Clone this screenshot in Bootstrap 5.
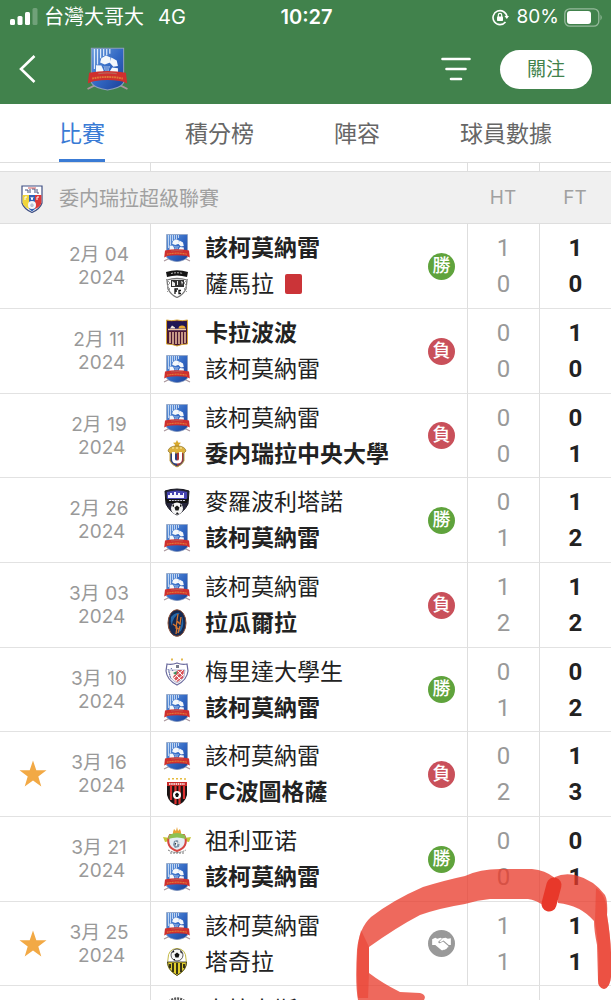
<!DOCTYPE html>
<html lang="zh-Hant">
<head>
<meta charset="utf-8">
<meta name="viewport" content="width=device-width, initial-scale=1">
<title>該柯莫納雷 - 比賽</title>
<link rel="stylesheet" href="https://cdn.jsdelivr.net/npm/bootstrap@5.3.0/dist/css/bootstrap.min.css">
<style>
  body { font-family: Inter, "Noto Sans CJK TC", sans-serif; color: #222; background: #fff; }
  a { text-decoration: none; }
  .screen { height: 100vh; overflow: hidden; }
  .topbar { background: #41824c; color: #fff; }
  .status { height: 34px; font-size: 20px; line-height: 34px; display: grid; grid-template-columns: 1fr auto 1fr; padding: 0 8px 0 10px; }
  .status-time { font-weight: 600; }
  .carrier { margin-left: 6px; }
  .status-net { margin-left: 14px; }
  .pct { font-size: 19px; margin: 0 5px 0 8px; }
  .team-bar { height: 70px; padding: 0 19px; }
  .back { width: 67px; }
  .follow { width: 92px; height: 39px; border: 0; border-radius: 20px; background: #fff; color: #41824c; font-size: 19px; line-height: 39px; padding: 0; margin-left: 29px; }
  .plain { border: 0; background: none; padding: 0; line-height: 0; }
  .tabs { height: 59px; padding: 0 59px; border-bottom: 1px solid #dedede; }
  .tabs a { font-size: 23px; line-height: 60px; color: #666; height: 58px; }
  .tabs a.active { color: #3a7bd5; border-bottom: 3px solid #3a7bd5; }
  .fixtures { width: 100%; table-layout: fixed; border-collapse: separate; border-spacing: 0; }
  .fixtures th, .fixtures td { padding: 0; vertical-align: middle; text-align: center; }
  .c-star { width: 65px; } .c-date { width: 86px; } .c-res { width: 51px; } .c-num { width: 72px; }
  .fixtures .date { padding-right: 17px; border-right: 1px solid #dedede; color: #999; font-size: 19px; line-height: 23px; white-space: pre; }
  .fixtures .ht, .fixtures .ft { border-left: 1px solid #dedede; font-family: Roboto, "Noto Sans", sans-serif; font-size: 24px; line-height: 36px; }
  .ht { color: #999; font-weight: 400; }
  .ft { font-weight: 700; }
  .gap-row td { height: 8px; }
  .league th { height: 53px; background: #f0f0f0; border-top: 1px solid #dedede; border-bottom: 1px solid #dedede; color: #a0a0a0; font-size: 20px; font-weight: 400; }
  .league th { padding-top: 2px; }
  .league .league-name { text-align: left; padding-left: 21px; }
  .league .h { font-size: 19px; }
  .match td { height: 85px; border-bottom: 1px solid #e2e2e2; }
  .match:nth-child(3n) td { height: 84px; }
  .team { height: 36px; line-height: 36px; font-size: 23px; padding-left: 12px; gap: 14px; white-space: nowrap; display: flex; align-items: center; }
  .team svg { width: 28px; height: 28px; flex: none; }
  .win { font-weight: 700; }
  .red-card { width: 17px; height: 20px; border-radius: 2px; background: #cb3438; margin-left: -3px; }
  .res { display: inline-block; width: 27px; height: 27px; border-radius: 50%; color: #fff; font-size: 18px; line-height: 26px; vertical-align: middle; font-weight: 500; }
  .res-w { background: #5fa33c; } .res-l { background: #c9505a; } .res-d { background: #999; }
  .res svg { display: block; }
  .marker { position: absolute; right: 0; top: 862px; pointer-events: none; }
</style>
</head>
<body>
<svg width="0" height="0" class="position-absolute" aria-hidden="true">
  <defs>
    <linearGradient id="blue" x1="0" x2="1" y1="0" y2="1"><stop offset="0" stop-color="#6d9fdd"/><stop offset=".5" stop-color="#3268c4"/><stop offset="1" stop-color="#1c3f96"/></linearGradient>
    <symbol id="home" viewBox="0 0 28 28">
      <path d="M1 27l6-3M27 27l-6-3" stroke="#a9959c" stroke-width="1.200"/>
      <path d="M3.500 .5h21V23q-2 3.500-10.500 4.700Q5.500 26.500 3.500 23z" fill="url(#blue)" stroke="#8c9dbd" stroke-width=".7"/>
      <path d="M5.500 1v13M7.500 1v10M9.500 1v6M11.500 1v4.500M13.500 1v4M15.500 1v3" stroke="#dce9fa" stroke-width=".8"/>
      <path d="M10 7l3-1.800 3 1.300-.3 3.300-3.500 1.200-3-1.200zM16.500 6.500l3.500 2 .8 3.500-3 .5-2.300-2.500zM6.500 11.500l3.500.3 1.500 3.200-1.500 2.500H6.500zM17 13l3.800.5V18h-4.300l-1-2.500zM11.500 12h4l-1 3.500h-2z" fill="#f4f7fb"/>
      <path d="M11.500 12h4l-1 3.500h-2z" fill="#6f97d8"/>
      <path d="M2 16.500q12-2.500 24 0l.8 7q-2.800-1.500-4.800-1.700-8-1.300-16 0-2 .2-4.800 1.700z" fill="#cf302e"/>
      <path d="M4 20.200q10-2 20 0" fill="none" stroke="#dd7b38" stroke-width="1.200" stroke-dasharray="1.200 .4"/>
      <path d="M8 17q6-1 12 0" fill="none" stroke="#b9655a" stroke-width=".7"/>
    </symbol>
    <symbol id="zamora" viewBox="0 0 28 28">
      <path d="M4 10q5-1.500 10-1.500T24 10l-1 9q-3 6-9 8.500Q8 25 5 19z" fill="#fff" stroke="#777" stroke-width="1.300"/>
      <path d="M3 2q11-3.500 22 0l-1 5q-10-3-20 0z" fill="#151515"/>
      <path d="M8 3.500q6-1.500 12 0" fill="none" stroke="#bbb" stroke-dasharray="2 1"/>
      <path d="M8 10h13v7H8z" fill="#333"/><path d="M9 11l3 2v3H9zM14 11h1v4h-1zM18 11l2 1-1 3z" fill="#eee"/>
      <path d="M3 9l4 4-3 3 3 3-3 3M25 9l-4 4 3 3-3 3 3 3" fill="none" stroke="#999"/>
      <path d="M12 24v-5h3M12 21h2M18 20.500h-2v3h2" fill="none" stroke="#111" stroke-width="1.300"/>
    </symbol>
    <symbol id="carabobo" viewBox="0 0 28 28">
      <path d="M3.500 1q5 1.500 10.500 0 5.500 1.500 10.500 0v24q-6 0-10.500 2Q9.500 25 3.500 25z" fill="#4a1733" stroke="#d8a737" stroke-width="1"/>
      <path d="M4.500 2.500h19v9h-19z" fill="#211654"/><path d="M15.500 9.500q0-3 3.500-3t3.500 3z" fill="#e9a82f"/><path d="M7 9.500l2-3 3 2v1z" fill="#f4eadf"/>
      <path d="M5 10.500h18M7 13v11M10 13v12M13 13v12M16 13v12M19 13v12M22 13v11" stroke="#efc3a3" stroke-width="1.500"/>
    </symbol>
    <symbol id="ucv" viewBox="0 0 28 28">
      <path d="M14 0l1.200 2.500 2.800.3-2 2 .5 2.500L14 6l-2.500 1.300.5-2.500-2-2 2.800-.3z" fill="#d8a92d"/>
      <path d="M5 11q1-5 9-5t9 5l-3 3H8z" fill="#ddb23e" stroke="#8f7429" stroke-width=".7"/>
      <path d="M7 13h14v8q-2 4-7 6-5-2-7-6z" fill="#2b3c79" stroke="#c39c38"/>
      <path d="M14 13h6v8q-2 3-6 5z" fill="#a83434"/>
      <path d="M10.500 12v7q0 3 3.500 3t3.500-3v-7" fill="none" stroke="#fff" stroke-width="3"/>
      <path d="M9 8h2M13 8h2M17 8h2" stroke="#fff3b0"/>
    </symbol>
    <symbol id="metro" viewBox="0 0 28 28">
      <path d="M2 3q12-4 24 0l-1 13q-4 8-11 11Q7 24 3 16z" fill="#25253b" stroke="#15151f"/>
      <path d="M4 4q10-3 20 0v7H4z" fill="#4544b1"/><path d="M5 10V7h2V5h2v2h2V4h2v3h2V5h2v2h3V5h1v5z" fill="#f4f3ff"/>
      <path d="M2 10l3 1h18l3-1-2 5H4z" fill="#111"/><path d="M6 12.500h16" stroke="#c8c8d8" stroke-dasharray="2 .8"/>
      <circle cx="14" cy="20.500" r="6" fill="#f5f5f5"/><path d="M14 17.500l2.500 2-1 3h-3l-1-3zM9 18l2-2v3zM19 18l-2-2v3zM13 26l1-2 2 2z" fill="#181818"/>
    </symbol>
    <symbol id="guaira" viewBox="0 0 28 28">
      <ellipse cx="14" cy="14" rx="9" ry="13.300" fill="#16284f" stroke="#8a4f35" stroke-width="1"/>
      <path d="M8 8q5-5 9-4-8 4-8 13-2-4-1-9zM19 7q3 8-1 15l-4 2q6-8 5-17z" fill="#2668a8"/>
      <path d="M15 5l-1 6M18 8l-1 7-3-3-1 7 3 1M10 15l4 3-1 7M17 17l-2 7" fill="none" stroke="#d87832" stroke-width="1.300"/>
    </symbol>
    <symbol id="merida" viewBox="0 0 28 28">
      <path d="M9 .5v2M19 .5v2" stroke="#e3ba4e" stroke-width="2"/>
      <path d="M4 6q5 1 10-1 5 2 10 1l1 7q-1 9-11 14Q4 22 3 13z" fill="#fff" stroke="#69699d" stroke-width="1.200"/>
      <path d="M6 12h16l-1 7q-3 4-7 6-4-2-7-6z" fill="#faf3f3" stroke="#9494ba" stroke-width=".7"/>
      <path d="M15 12h6l-1 8-6 4-4-5z" fill="#d85157"/><path d="M12 16l6 6M15 13l5 5M11 20l9-8M13 23l8-7" stroke="#fff"/>
      <path d="M13 7h3v3h-3z" fill="#777b8d"/><path d="M5 11l3 10M8 10l2 3" stroke="#5567a5" stroke-dasharray="1.500 1"/><path d="M10 15l4-2-1 4z" fill="#3b8b5a"/>
    </symbol>
    <symbol id="portu" viewBox="0 0 28 28">
      <path d="M5 1h2M9 .8h2M13 .6h2M17 .8h2M21 1h2" stroke="#e5bb3c" stroke-width="1.600"/>
      <path d="M4 4h20v13q-2 8-10 10.500Q6 25 4 17z" fill="#181414"/><path d="M4 4h20v4H4z" fill="#c92a2a"/>
      <path d="M8 8v14M12.500 8v18M16.500 8v18M21 8v13" stroke="#dc3030" stroke-width="2.200"/>
      <path d="M6 6h16" stroke="#fff" stroke-width="1.500" stroke-dasharray="1.500 .7"/>
      <circle cx="14" cy="17" r="4" fill="#fff"/><path d="M14 14.500l2 1.800-1 2.700h-2l-1-2.700z" fill="#111"/>
    </symbol>
    <symbol id="zulia" viewBox="0 0 28 28">
      <path d="M10 5l1-3 2 2 1-4 1 4 2-2 1 3v3h-8z" fill="#e8a234"/>
      <path d="M0 10l7 1v3l-5 1zM28 10l-7 1v3l5 1z" fill="#c7c638"/>
      <path d="M7 8h14q3 5 1 10-2 4-8 6-6-2-8-6-2-5 1-10z" fill="#e5eef5" stroke="#d74743" stroke-width="2"/>
      <path d="M6 8q8-4 16 0l1 4q-9-3-18 0z" fill="#8cc152"/>
      <path d="M11 14l3-1 3 2-1 5-4 1-2-3z" fill="#7d93a9"/><path d="M12 15l2 1-1 3M16 14v3" stroke="#fff" stroke-width="1.300"/>
      <path d="M5 23q9 5 18 0M7 26h14" fill="none" stroke="#777" stroke-dasharray="2 1"/>
    </symbol>
    <symbol id="tachira" viewBox="0 0 28 28">
      <path d="M5 11q0-10 9-10.500Q23 1 23 11q3 10-9 16.500Q2 21 5 11z" fill="#fff" stroke="#c3b944"/>
      <circle cx="14" cy="7" r="6" fill="#f7f7f7" stroke="#333" stroke-width=".8"/><path d="M14 4.500l2.500 2-1 3h-3l-1-3zM8.500 5l2-2.500 1 1.500zM17 4l1-1.500L19.500 6zM10 11l2 0 0 1.500z" fill="#111"/>
      <path d="M4.500 14h19q0 8-9.500 13.500Q5 22 4.500 14z" fill="#e2ce2d" stroke="#222" stroke-width=".8"/>
      <path d="M7 16v4M10 15v9M14 15v11M18 15v9M21 16v4" stroke="#272513" stroke-width="1.800"/>
    </symbol>
    <symbol id="caracas" viewBox="0 0 28 28">
      <circle cx="14" cy="14" r="11.500" fill="#fff" stroke="#555" stroke-width="2.500" stroke-dasharray="2 1"/><circle cx="14" cy="14" r="8" fill="#a3343c"/>
    </symbol>
    <symbol id="fvf" viewBox="0 0 22 28">
      <path d="M1 1h20v17q-2 6-10 9.500Q3 24 1 18z" fill="#fff" stroke="#3f4f83" stroke-width="1.200"/>
      <path d="M1.600 10H8v14q-5-2-6.400-6z" fill="#f0d53c"/><path d="M8 10h6v14l-3 2.500L8 24z" fill="#3463b5"/><path d="M14 10h6.400v8q-1.400 4-6.400 6z" fill="#dc3838"/>
      <path d="M4 5h3v3M9 4v4M11 4h3v4M16 4v4h2" fill="none" stroke="#44517e"/><path d="M7 3h8" stroke="#d45a5a"/>
      <path d="M10 12l1 3 1-3M4 15v-3h2M16 15v-3h2" fill="none" stroke="#fff"/><circle cx="11" cy="20" r="4" fill="#f4f6fa"/><path d="M9 20l2-2 2 2-1 2h-2z" fill="#b9c2d6"/>
    </symbol>
    <symbol id="star" viewBox="0 0 28 28"><path d="M14 .5l3.300 9.700 10.200.1-8.200 6.200 3 9.900-8.300-6-8.300 6 3-9.900L.5 10.300l10.200-.1z" fill="#f2a945"/></symbol>
  </defs>
</svg>

<div class="screen position-relative">
  <header class="topbar">
    <div class="status">
      <div class="d-flex align-items-center">
        <svg width="28" height="18" viewBox="0 0 28 18" fill="#fff" aria-hidden="true"><rect y="11" width="5" height="6" rx="1.500"/><rect x="7.500" y="8" width="5" height="9" rx="1.500"/><rect x="15" y="4" width="5" height="13" rx="1.500"/><rect x="22.500" width="5" height="17" rx="1.500" opacity=".25"/></svg>
        <span class="carrier">台灣大哥大</span><span class="status-net">4G</span>
      </div>
      <span class="status-time">10:27</span>
      <div class="d-flex align-items-center justify-content-end">
        <svg width="17" height="17" viewBox="0 0 17 17" fill="none" stroke="#fff" stroke-width="1.600" aria-hidden="true"><path d="M13.500 13A7 7 0 1 1 15 8"/><path d="M12.500 7h4.500l-2.200 3z" fill="#fff" stroke="none"/><rect x="5" y="7.500" width="6" height="4.500" rx=".8" fill="#fff" stroke="none"/><path d="M6.300 8V6a1.700 1.700 0 0 1 3.400 0v2" stroke-width="1.200"/></svg>
        <span class="pct">80%</span>
        <svg width="39" height="19" viewBox="0 0 39 19" aria-hidden="true"><rect x=".8" y=".8" width="34" height="17.400" rx="5" fill="none" stroke="#fff" stroke-opacity=".45" stroke-width="1.300"/><rect x="3" y="3" width="24" height="13" rx="3" fill="#fff"/><path d="M36.500 6.500q2.500 3 0 6z" fill="#fff" opacity=".45"/></svg>
      </div>
    </div>
    <div class="team-bar d-flex align-items-center">
      <button class="plain back text-start" type="button" aria-label="返回"><svg width="17" height="28" viewBox="0 0 17 28" fill="none" stroke="#fff" stroke-width="2.600"><path d="M15.500 1L2 14l13.500 13"/></svg></button>
      <svg width="43" height="44" aria-hidden="true"><use href="#home"/></svg>
      <button class="plain ms-auto" type="button" aria-label="篩選"><svg width="30" height="24" viewBox="0 0 30 24" stroke="#fff" stroke-width="2.600" stroke-linecap="round"><path d="M1.500 2h27M5.500 12h19M10 22h10"/></svg></button>
      <button class="follow" type="button">關注</button>
    </div>
  </header>

  <nav class="tabs d-flex justify-content-between">
    <a href="#" class="active" aria-current="page">比賽</a><a href="#">積分榜</a><a href="#">陣容</a><a href="#">球員數據</a>
  </nav>

  <table class="fixtures">
    <colgroup><col class="c-star"><col class="c-date"><col><col class="c-res"><col class="c-num"><col class="c-num"></colgroup>
    <thead>
      <tr class="gap-row"><td></td><td class="date"></td><td></td><td></td><td class="ht"></td><td class="ft"></td></tr>
      <tr class="league">
        <th colspan="4" class="league-name"><span class="d-flex align-items-center"><svg class="me-3" width="22" height="28" aria-hidden="true"><use href="#fvf"/></svg>委内瑞拉超級聯賽</span></th>
        <th class="h">HT</th><th class="h">FT</th>
      </tr>
    </thead>
    <tbody>
      <tr class="match"><td></td><td class="date">2月 04<br> 2024</td>
        <td><div class="team win"><svg><use href="#home"/></svg>該柯莫納雷</div><div class="team"><svg><use href="#zamora"/></svg>薩馬拉<span class="red-card"></span></div></td>
        <td><span class="res res-w">勝</span></td><td class="ht">1<br>0</td><td class="ft">1<br>0</td></tr>
      <tr class="match"><td></td><td class="date">2月 11<br> 2024</td>
        <td><div class="team win"><svg><use href="#carabobo"/></svg>卡拉波波</div><div class="team"><svg><use href="#home"/></svg>該柯莫納雷</div></td>
        <td><span class="res res-l">負</span></td><td class="ht">0<br>0</td><td class="ft">1<br>0</td></tr>
      <tr class="match"><td></td><td class="date">2月 19<br> 2024</td>
        <td><div class="team"><svg><use href="#home"/></svg>該柯莫納雷</div><div class="team win"><svg><use href="#ucv"/></svg>委内瑞拉中央大學</div></td>
        <td><span class="res res-l">負</span></td><td class="ht">0<br>0</td><td class="ft">0<br>1</td></tr>
      <tr class="match"><td></td><td class="date">2月 26<br> 2024</td>
        <td><div class="team"><svg><use href="#metro"/></svg>麥羅波利塔諾</div><div class="team win"><svg><use href="#home"/></svg>該柯莫納雷</div></td>
        <td><span class="res res-w">勝</span></td><td class="ht">0<br>1</td><td class="ft">1<br>2</td></tr>
      <tr class="match"><td></td><td class="date">3月 03<br> 2024</td>
        <td><div class="team"><svg><use href="#home"/></svg>該柯莫納雷</div><div class="team win"><svg><use href="#guaira"/></svg>拉瓜爾拉</div></td>
        <td><span class="res res-l">負</span></td><td class="ht">1<br>2</td><td class="ft">1<br>2</td></tr>
      <tr class="match"><td></td><td class="date">3月 10<br> 2024</td>
        <td><div class="team"><svg><use href="#merida"/></svg>梅里達大學生</div><div class="team win"><svg><use href="#home"/></svg>該柯莫納雷</div></td>
        <td><span class="res res-w">勝</span></td><td class="ht">0<br>1</td><td class="ft">0<br>2</td></tr>
      <tr class="match"><td><svg width="28" height="28" aria-label="收藏"><use href="#star"/></svg></td><td class="date">3月 16<br> 2024</td>
        <td><div class="team"><svg><use href="#home"/></svg>該柯莫納雷</div><div class="team win"><svg><use href="#portu"/></svg>FC波圖格薩</div></td>
        <td><span class="res res-l">負</span></td><td class="ht">0<br>2</td><td class="ft">1<br>3</td></tr>
      <tr class="match"><td></td><td class="date">3月 21<br> 2024</td>
        <td><div class="team"><svg><use href="#zulia"/></svg>祖利亚诺</div><div class="team win"><svg><use href="#home"/></svg>該柯莫納雷</div></td>
        <td><span class="res res-w">勝</span></td><td class="ht">0<br>0</td><td class="ft">0<br>1</td></tr>
      <tr class="match"><td><svg width="28" height="28" aria-label="收藏"><use href="#star"/></svg></td><td class="date">3月 25<br> 2024</td>
        <td><div class="team"><svg><use href="#home"/></svg>該柯莫納雷</div><div class="team"><svg><use href="#tachira"/></svg>塔奇拉</div></td>
        <td><span class="res res-d"><svg width="27" height="27" viewBox="0 0 26 26" aria-label="和"><path d="M4 9l3-1.500 2 1 3-1 1.500.8L10 11q-.5 1.800 1.500 1.800l3-1.800 5 4.300q.8 1.500-1 1.600.2 1.400-1.500 1.300-.5 1.200-2 .8-1.200 1-2.500 0L7 14.500H4z" fill="#fff"/><path d="M14 8l3-.5 2 1L22 8v6.500h-2L15 10.200l-3 1.600-1-.5z" fill="#fff"/></svg></span></td><td class="ht">1<br>1</td><td class="ft">1<br>1</td></tr>
      <tr class="match"><td></td><td class="date"></td>
        <td><div class="team"><svg><use href="#caracas"/></svg>卡拉卡斯</div><div class="team"><svg><use href="#home"/></svg>該柯莫納雷</div></td>
        <td></td><td></td><td class="ft"></td></tr>
    </tbody>
  </table>

  <svg class="marker" width="261" height="138" viewBox="350 862 261 138" aria-hidden="true">
    <path fill="#e93a2a" opacity=".76" d="M358 1000Q355 985 357 950 359 928 371 917 393 900 423 887 446 880 465 876 480 869 500 869H532Q545 870 555 878L549 909Q535 899 528 899H490Q478 900 465 904 440 908 420 915 397 927 369 947V973Q382 983 400 992L420 993Q427 995 424 1000z"/>
    <path fill="#e93a2a" opacity=".76" d="M555 877Q563 873 575 875 594 880 605 895 608 901 607 915 612 945 611 970 612 987 604 989 598 988 598 980L597 945Q594 930 594 921 580 905 558 903z"/>
    <path fill="#e93a2a" opacity=".5" d="M358 998Q355 950 361 930L369 947V973L368 998zM596 888Q607 895 607 915 612 945 611 970 612 987 604 989 598 988 598 980 600 950 595 922z"/>
    <path d="M554 885l-5 19" stroke="#e8382a" stroke-width="15" stroke-linecap="round"/>
  </svg>
</div>
<script src="https://cdn.jsdelivr.net/npm/bootstrap@5.3.0/dist/js/bootstrap.bundle.min.js"></script>
</body>
</html>
